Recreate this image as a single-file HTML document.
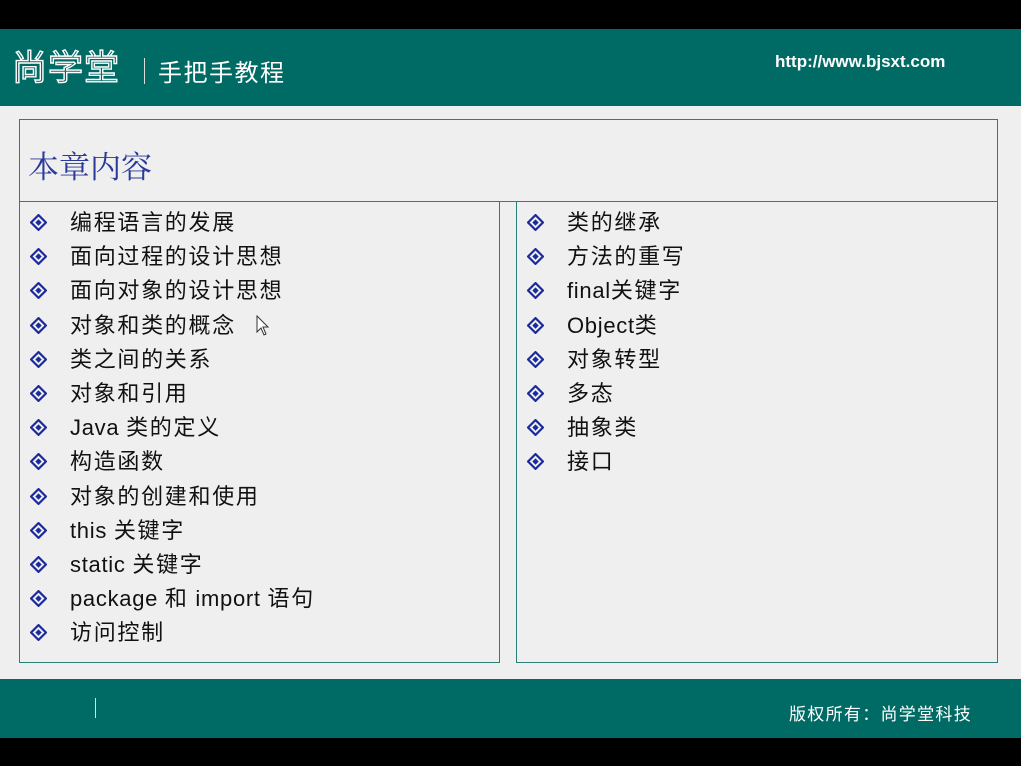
<!DOCTYPE html>
<html><head><meta charset="utf-8"><style>
*{margin:0;padding:0;box-sizing:border-box}
body{width:1021px;height:766px;background:#000;position:relative;overflow:hidden;font-family:"Liberation Sans","Noto Sans CJK SC",sans-serif}
.abs{position:absolute}
.top{left:0;top:29px;width:1021px;height:77px;background:#006a64}
.main{left:0;top:106px;width:1021px;height:573px;background:#efefef}
.foot{left:0;top:679px;width:1021px;height:59px;background:#006a64}
.box{border:1px solid #2a7f7a}
.item{position:absolute;font-size:22px;letter-spacing:1.7px;color:#111;white-space:nowrap;line-height:24px}
.item i{font-style:normal;letter-spacing:0.7px}
.b{position:absolute;width:17px;height:17px}
</style></head><body>
<div class="abs top"></div>
<svg class="abs" style="left:10px;top:44px" width="120" height="45"><text x="2" y="36" font-size="35" font-family="WenQuanYi Zen Hei,sans-serif" fill="none" stroke="#fff" stroke-width="1.4" letter-spacing="1">尚学堂</text></svg>
<div class="abs" style="left:144px;top:58px;width:1px;height:26px;background:#ddd"></div>
<div class="abs" style="left:158px;top:53px;font-size:24px;color:#fff;letter-spacing:1.5px;font-family:'WenQuanYi Zen Hei',sans-serif">手把手教程</div>
<div class="abs" style="left:775px;top:52px;font-size:17px;color:#fff;font-weight:bold">http://www.bjsxt.com</div>
<div class="abs main"></div>
<div class="abs box" style="left:19px;top:119px;width:979px;height:83px"></div>
<div class="abs" style="left:28px;top:142px;font-size:31px;color:#2a3a9a;font-family:'Liberation Serif','Noto Serif CJK SC',serif">本章内容</div>
<div class="abs box" style="left:19px;top:201px;width:481px;height:462px"></div>
<div class="abs box" style="left:516px;top:201px;width:482px;height:462px"></div>
<svg width="0" height="0" style="position:absolute"><defs><g id="d"><path d="M8 1L15 8L8 15L1 8Z" fill="none" stroke="#1a2a9a" stroke-width="2"/><path d="M8 5L11 8L8 11L5 8Z" fill="#1a2a9a"/></g></defs></svg>
<div id="L"></div>
<script>
var L=["编程语言的发展","面向过程的设计思想","面向对象的设计思想","对象和类的概念","类之间的关系","对象和引用","<i>Java </i>类的定义","构造函数","对象的创建和使用","<i>this </i>关键字","<i>static </i>关键字","<i>package </i>和<i> import </i>语句","访问控制"];
var R=["类的继承","方法的重写","<i>final</i>关键字","<i>Object</i>类","对象转型","多态","抽象类","接口"];
var h="";
function add(a,bx,tx){a.forEach(function(t,i){var y=211+i*34.2;h+='<svg class="b" style="left:'+bx+'px;top:'+(y+3)+'px" viewBox="0 0 16 16"><use href="#d"/></svg><div class="item" style="left:'+tx+'px;top:'+y+'px">'+t+'</div>';});}
add(L,30,70);add(R,527,567);
document.getElementById("L").innerHTML=h;
</script>
<svg class="abs" style="left:256px;top:315px" width="14" height="22" viewBox="0 0 14 22"><path d="M1 1L1 17L5 13L8 20L10 19L7 12L12 12Z" fill="#fff" stroke="#333" stroke-width="1"/></svg>
<div class="abs foot"></div>
<div class="abs" style="left:95px;top:698px;width:1px;height:20px;background:#ddd"></div>
<div class="abs" style="left:789px;top:700px;font-size:17px;letter-spacing:1.3px;color:#fff">版权所有：尚学堂科技</div>
</body></html>
